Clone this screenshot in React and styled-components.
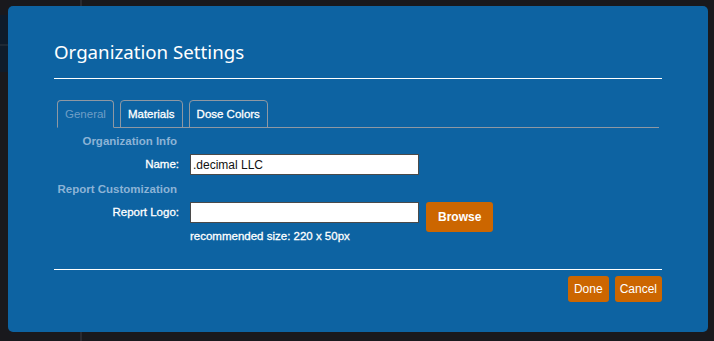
import React from 'react';
import styled, { createGlobalStyle } from 'styled-components';

const Global = createGlobalStyle`
  html, body {
    margin: 0;
    padding: 0;
    background: #19191d;
    overflow: hidden;
  }
  body {
    font-family: "Liberation Sans", Arial, sans-serif;
  }
`;

const Page = styled.div`
  position: relative;
  width: 714px;
  height: 341px;
  display: flex;
  background: #19191d;
`;

const Sidebar = styled.div`
  width: 80px;
  border-right: 2px solid #2a2a30;
  display: flex;
  flex-direction: column;
  padding-top: 15px;
`;

const SideItem = styled.div`
  height: ${p => p.h}px;
  background: ${p => p.bg};
  border-bottom: ${p => (p.line ? '2px solid #1e2935' : 'none')};
`;

const Overlay = styled.div`
  position: absolute;
  left: 8px;
  top: 6px;
  width: 700px;
  height: 326px;
  box-sizing: border-box;
  padding: 0 46px;
  background: #0d63a2;
  border-radius: 5px;
  display: flex;
  flex-direction: column;
`;

const Title = styled.h2`
  margin: 0;
  padding-top: 33px;
  height: 39px;
  font-family: "Noto Sans", "Open Sans", sans-serif;
  font-weight: 400;
  font-size: 18.7px;
  line-height: 26px;
  color: #ffffff;
  border-bottom: 1px solid #ffffff;
`;

const TabList = styled.div`
  margin: 21px 3px 0;
  display: flex;
  gap: 6px;
  border-bottom: 1px solid #8e98a3;
`;

const Tab = styled.div`
  height: 28px;
  box-sizing: border-box;
  padding: 0 7px;
  margin-bottom: -1px;
  border: 1px solid #8e98a3;
  border-bottom-color: ${p => (p.active ? '#0d63a2' : '#8e98a3')};
  border-radius: 4px 4px 0 0;
  display: flex;
  align-items: center;
  font-size: 11.5px;
  color: ${p => (p.active ? '#6f9ec6' : '#ffffff')};
  -webkit-text-stroke: ${p => (p.active ? '0' : '0.3px #ffffff')};
`;

const Form = styled.div`
  display: grid;
  grid-template-columns: 125px 1fr;
  column-gap: 11px;
  padding-top: 3px;
  height: 141px;
  box-sizing: border-box;
  align-content: start;
`;

const Section = styled.div`
  height: 20px;
  line-height: 20px;
  text-align: right;
  padding-right: 2px;
  font-size: 11.5px;
  font-weight: 700;
  color: #8cb3d6;
  margin-top: ${p => p.top || 0}px;
`;

const Spacer = styled.div`
  margin-top: ${p => p.top || 0}px;
`;

const Label = styled.label`
  margin-top: 3px;
  height: 21px;
  line-height: 21px;
  text-align: right;
  font-size: 11.5px;
  color: #ffffff;
  -webkit-text-stroke: 0.3px #ffffff;
`;

const Field = styled.div`
  margin-top: 3px;
  display: flex;
  align-items: flex-start;
  gap: 7px;
`;

const Stack = styled.div`
  display: flex;
  flex-direction: column;
`;

const Input = styled.input`
  width: 229px;
  height: 21px;
  box-sizing: border-box;
  margin: 0;
  padding: 0 2px;
  border: 1px solid #4a4a4a;
  border-radius: 0;
  background: #ffffff;
  font-family: "Liberation Sans", Arial, sans-serif;
  font-size: 12px;
  color: #111;
  outline: none;
`;

const Hint = styled.div`
  margin-top: 6px;
  font-size: 11.5px;
  line-height: 14px;
  color: #ffffff;
  -webkit-text-stroke: 0.3px #ffffff;
`;

const Button = styled.button`
  height: ${p => (p.tall ? 30 : 26)}px;
  padding: 0 ${p => p.px || 6}px;
  border: none;
  border-radius: 3px;
  background: #cc6600;
  color: #ffffff;
  font-family: "Liberation Sans", Arial, sans-serif;
  font-size: 12px;
  font-weight: ${p => (p.bold ? 700 : 400)};
`;

const Footer = styled.div`
  border-top: 1px solid #ffffff;
  padding-top: 6px;
  display: flex;
  justify-content: flex-end;
  gap: 6px;
`;

export default function App() {
  return (
    <>
      <Global />
      <Page>
        <Sidebar>
          <SideItem h={29} bg="#0e1b2a" line />
          <SideItem h={26} bg="#0f1c2b" />
        </Sidebar>
        <Overlay>
          <Title>Organization Settings</Title>
          <TabList>
            <Tab active>General</Tab>
            <Tab>Materials</Tab>
            <Tab>Dose Colors</Tab>
          </TabList>
          <Form>
            <Section>Organization Info</Section>
            <div />
            <Label>Name:</Label>
            <Field>
              <Input defaultValue=".decimal LLC" />
            </Field>
            <Section top={4}>Report Customization</Section>
            <Spacer />
            <Label>Report Logo:</Label>
            <Field>
              <Stack>
                <Input />
                <Hint>recommended size: 220 x 50px</Hint>
              </Stack>
              <Button tall bold px={12}>Browse</Button>
            </Field>
          </Form>
          <Footer>
            <Button>Done</Button>
            <Button px={5}>Cancel</Button>
          </Footer>
        </Overlay>
      </Page>
    </>
  );
}
